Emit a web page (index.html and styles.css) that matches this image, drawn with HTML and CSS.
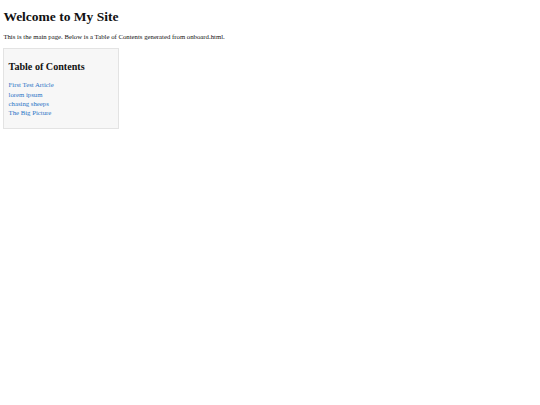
FILE: index.html
```html
<!DOCTYPE html>
<html lang="en">
<head>
<meta charset="utf-8">
<title>Welcome to My Site</title>
<link rel="stylesheet" href="styles.css">
</head>
<body>
<h1 class="title">Welcome to My Site</h1>
<p class="intro">This is the main page. Below is a Table of Contents generated from onboard.html.</p>
<nav class="toc">
  <h2 class="toc-title">Table of Contents</h2>
  <ul class="toc-list">
    <li><a href="#first-test-article">First Test Article</a></li>
    <li><a href="#lorem-ipsum">lorem ipsum</a></li>
    <li><a href="#chasing-sheeps">chasing sheeps</a></li>
    <li><a href="#the-big-picture">The Big Picture</a></li>
  </ul>
</nav>
</body>
</html>
```
FILE: styles.css
```css
html, body {
  background: #ffffff;
}
body {
  margin: 0;
  padding: 0 3.375px;
  font-family: "Liberation Serif", "Times New Roman", serif;
  font-size: 6.75px;
  color: #111;
}
.title {
  font-size: 13.5px;
  font-weight: bold;
  margin: 9.3px 0 0 0;
  line-height: 15.5px;
}
.intro {
  margin: 8px 0 0 0;
  line-height: 7.76px;
}
.toc {
  margin-top: 7.7px;
  width: 105px;
  padding: 4.2px;
  background: #f7f7f7;
  border: 1px solid #e3e3e3;
}
.toc-title {
  font-size: 10.125px;
  font-weight: bold;
  margin: 7.4px 0 0 0;
  line-height: 11.63px;
}
.toc-list {
  list-style: none;
  margin: 8px 0 6.1px 0;
  padding: 0;
}
.toc-list li {
  line-height: 9.33px;
}
.toc-list a {
  color: #2a74c6;
  text-decoration: none;
}
```
